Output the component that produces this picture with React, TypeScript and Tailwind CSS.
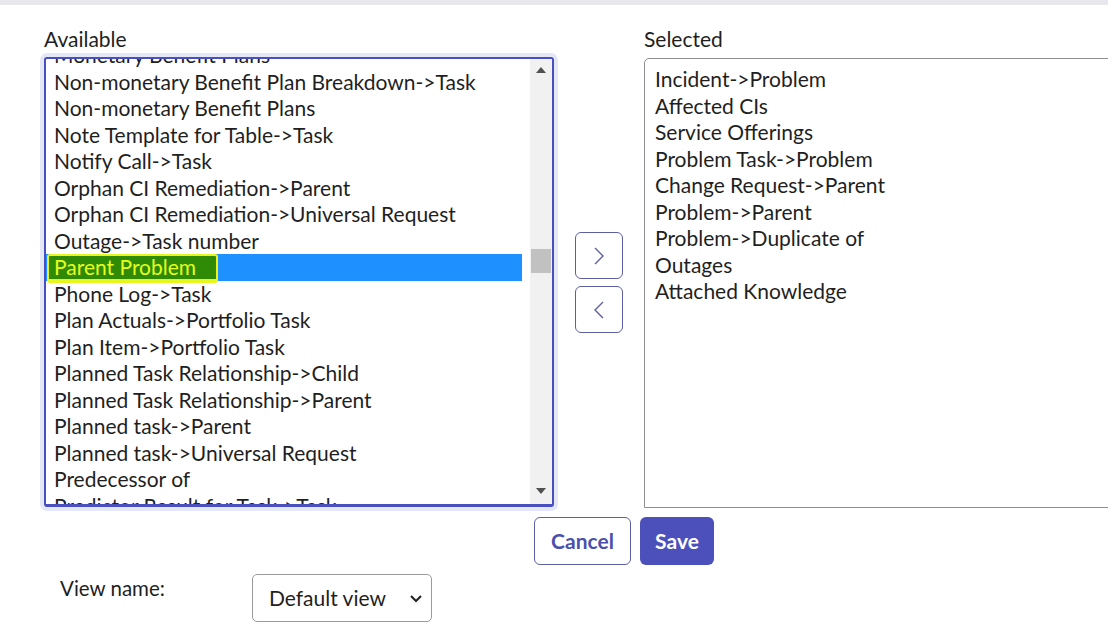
import React from 'react';

const available = [
  'Monetary Benefit Plans',
  'Non-monetary Benefit Plan Breakdown->Task',
  'Non-monetary Benefit Plans',
  'Note Template for Table->Task',
  'Notify Call->Task',
  'Orphan CI Remediation->Parent',
  'Orphan CI Remediation->Universal Request',
  'Outage->Task number',
  'Parent Problem',
  'Phone Log->Task',
  'Plan Actuals->Portfolio Task',
  'Plan Item->Portfolio Task',
  'Planned Task Relationship->Child',
  'Planned Task Relationship->Parent',
  'Planned task->Parent',
  'Planned task->Universal Request',
  'Predecessor of',
  'Predictor Result for Task->Task',
];

const selected = [
  'Incident->Problem',
  'Affected CIs',
  'Service Offerings',
  'Problem Task->Problem',
  'Change Request->Parent',
  'Problem->Parent',
  'Problem->Duplicate of',
  'Outages',
  'Attached Knowledge',
];

const font = { fontFamily: 'Lato, "Open Sans", sans-serif' };

const MoveButton: React.FC<{ dir: 'right' | 'left' }> = ({ dir }) => (
  <button className="w-[48px] h-[47px] rounded-[6px] border border-[#5d5fa3] bg-white flex items-center justify-center">
    <svg width="12" height="20" viewBox="0 0 12 20" fill="none" stroke="#5d5fa3" strokeWidth="1.4">
      {dir === 'right' ? <polyline points="2,2 10,10 2,18" /> : <polyline points="10,2 2,10 10,18" />}
    </svg>
  </button>
);

export default function App() {
  return (
    <div className="w-[1108px] h-[637px] overflow-hidden bg-white text-[#1f1f1f]" style={font}>
      <div className="h-[5px] bg-[#e7e7ed]" />

      {/* slushbucket */}
      <div className="flex pt-[22px]">
        <div className="ml-[40px] w-[519px] flex flex-col">
          <div className="pl-[4px] text-[21px] leading-[24px]">Available</div>
          <div className="mt-[2px] h-[458px] rounded-[7px] bg-[#e4e7f6] p-[4px]">
            <div className="h-full flex border-2 border-b-[3px] border-[#4a4fbf] rounded-[3px] bg-white overflow-hidden">
              <div className="w-[476px] overflow-hidden">
                <div className="mt-[-17px] text-[21px]">
                  {available.map((item) => (
                    <div
                      key={item}
                      className={`h-[26.5px] leading-[26.5px] pl-[8px] whitespace-nowrap ${
                        item === 'Parent Problem' ? 'bg-[#1e90ff]' : ''
                      }`}
                    >
                      {item === 'Parent Problem' ? (
                        <span className="inline-block h-[29px] leading-[22px] pl-[5px] pr-[20px] ml-[-7px] bg-[#2f8a06] text-[#e6ff1e] border-2 border-b-[4px] border-[#e8f520] rounded-[3px]">
                          Parent Problem
                        </span>
                      ) : (
                        item
                      )}
                    </div>
                  ))}
                </div>
              </div>
              <div className="w-[8px]" />
              <div className="w-[22px] bg-[#f1f1f1] flex flex-col items-center">
                <svg className="mt-[8px]" width="10" height="6" viewBox="0 0 10 6">
                  <polygon points="0,6 5,0 10,6" fill="#505050" />
                </svg>
                <div className="mt-[176px] w-[20px] h-[24px] bg-[#c1c1c1]" />
                <div className="flex-1" />
                <svg className="mb-[10px]" width="10" height="6" viewBox="0 0 10 6">
                  <polygon points="0,0 10,0 5,6" fill="#505050" />
                </svg>
              </div>
            </div>
          </div>
        </div>

        <div className="ml-[17px] pt-[205px] flex flex-col gap-[7px]">
          <MoveButton dir="right" />
          <MoveButton dir="left" />
        </div>

        <div className="ml-[21px] flex flex-col">
          <div className="text-[21px] leading-[24px]">Selected</div>
          <div className="mt-[7px] w-[480px] h-[450px] border border-[#8e8e8e] rounded-tl-[5px] pt-[7px] pl-[10px] text-[21px]">
            {selected.map((item) => (
              <div key={item} className="h-[26.5px] leading-[26.5px] whitespace-nowrap">
                {item}
              </div>
            ))}
          </div>
        </div>
      </div>

      {/* actions */}
      <div className="mt-[6px] ml-[534px] flex gap-[9px]">
        <button className="w-[97px] h-[48px] rounded-[6px] border border-[#5d5fa3] bg-white text-[#4b4fae] text-[21px] font-bold">
          Cancel
        </button>
        <button className="w-[74px] h-[48px] rounded-[6px] bg-[#4c50bb] text-white text-[21px] font-bold">
          Save
        </button>
      </div>

      <div className="mt-[9px] ml-[60px] flex items-start">
        <div className="w-[192px] pt-[1px] text-[20.5px] leading-[26px]">View name:</div>
        <div className="w-[180px] h-[48px] rounded-[5px] border border-[#9a9a9a] bg-white flex items-center pl-[16px] pr-[8px]">
          <span className="flex-1 text-[21px]">Default view</span>
          <svg width="14" height="9" viewBox="0 0 14 9" fill="none" stroke="#222" strokeWidth="2">
            <polyline points="2,2 7,7 12,2" />
          </svg>
        </div>
      </div>
    </div>
  );
}
